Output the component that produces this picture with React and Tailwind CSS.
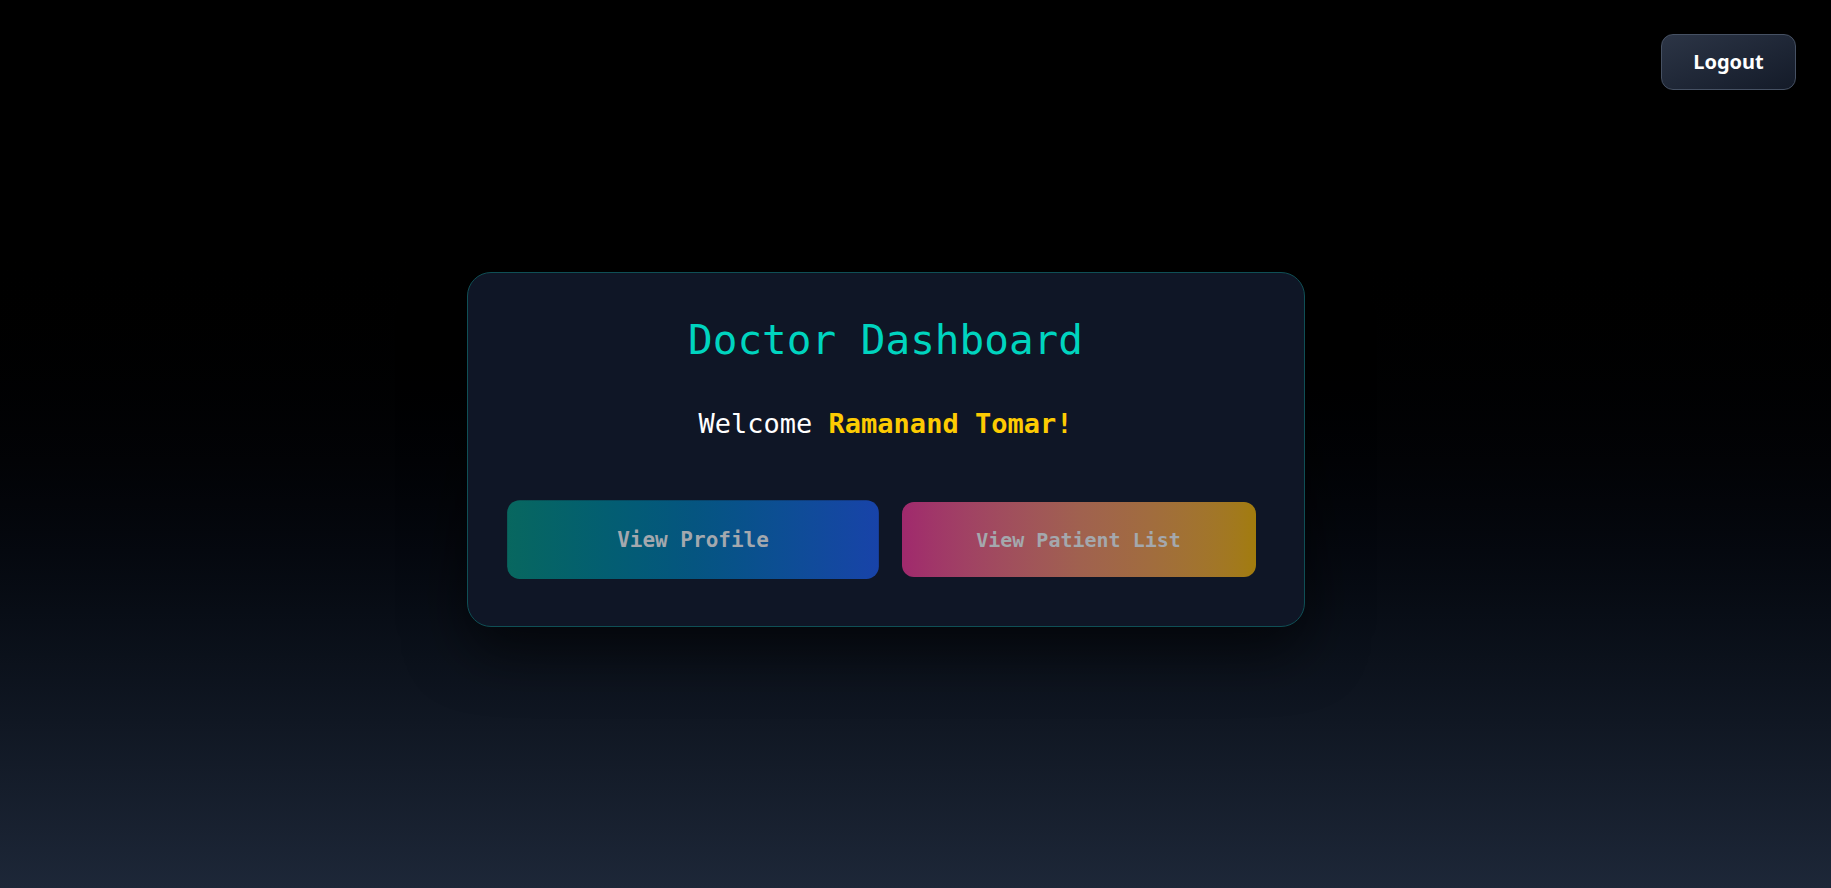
import React from 'react';

const mono = { fontFamily: '"DejaVu Sans Mono", "Liberation Mono", monospace' };

const DoctorDashboard = ({ name = 'Ramanand Tomar' }) => {
  return (
    <div className="min-h-screen w-full bg-linear-to-b from-black from-25% to-[#1d2738] flex flex-col">
      {/* Top bar with logout */}
      <div className="flex justify-end pt-[34px] pr-[35px]">
        <button
          className="h-[56px] w-[135px] rounded-xl border border-[#465163] bg-linear-to-br from-[#2c3546] to-[#141b29] text-white font-bold text-[20px] shadow-md"
          style={{ fontFamily: '"Noto Sans", "Open Sans", sans-serif' }}
        >
          Logout
        </button>
      </div>

      {/* Main card */}
      <div className="flex justify-center pt-[182px] pr-[60px]">
        <div
          className="w-[838px] rounded-3xl border border-[#0f4f55] bg-[#0f1626] px-12 pt-[43px] pb-[49px] shadow-[0_20px_60px_rgba(0,0,0,0.6)] flex flex-col items-center"
          style={mono}
        >
          <h1 className="text-[41px] leading-[49px] text-[#00d4bf]">Doctor Dashboard</h1>

          <p className="mt-[41px] text-[27px] leading-[36px] text-white">
            Welcome <span className="font-bold text-[#fdcb02]">{name}!</span>
          </p>

          <div className="mt-[60px] w-full grid grid-cols-2 gap-8">
            <button className="h-[75px] rounded-xl bg-linear-to-r from-[#08675f] via-[#055580] to-[#1843a9] text-[20px] font-bold text-[#a3a8ae] scale-105">
              View Profile
            </button>
            <button className="h-[75px] rounded-xl bg-linear-to-r from-[#a0296d] via-[#a0614f] to-[#a27c0c] text-[20px] font-bold text-[#a4a8ad]">
              View Patient List
            </button>
          </div>
        </div>
      </div>
    </div>
  );
};

export default function App() {
  return <DoctorDashboard />;
}
